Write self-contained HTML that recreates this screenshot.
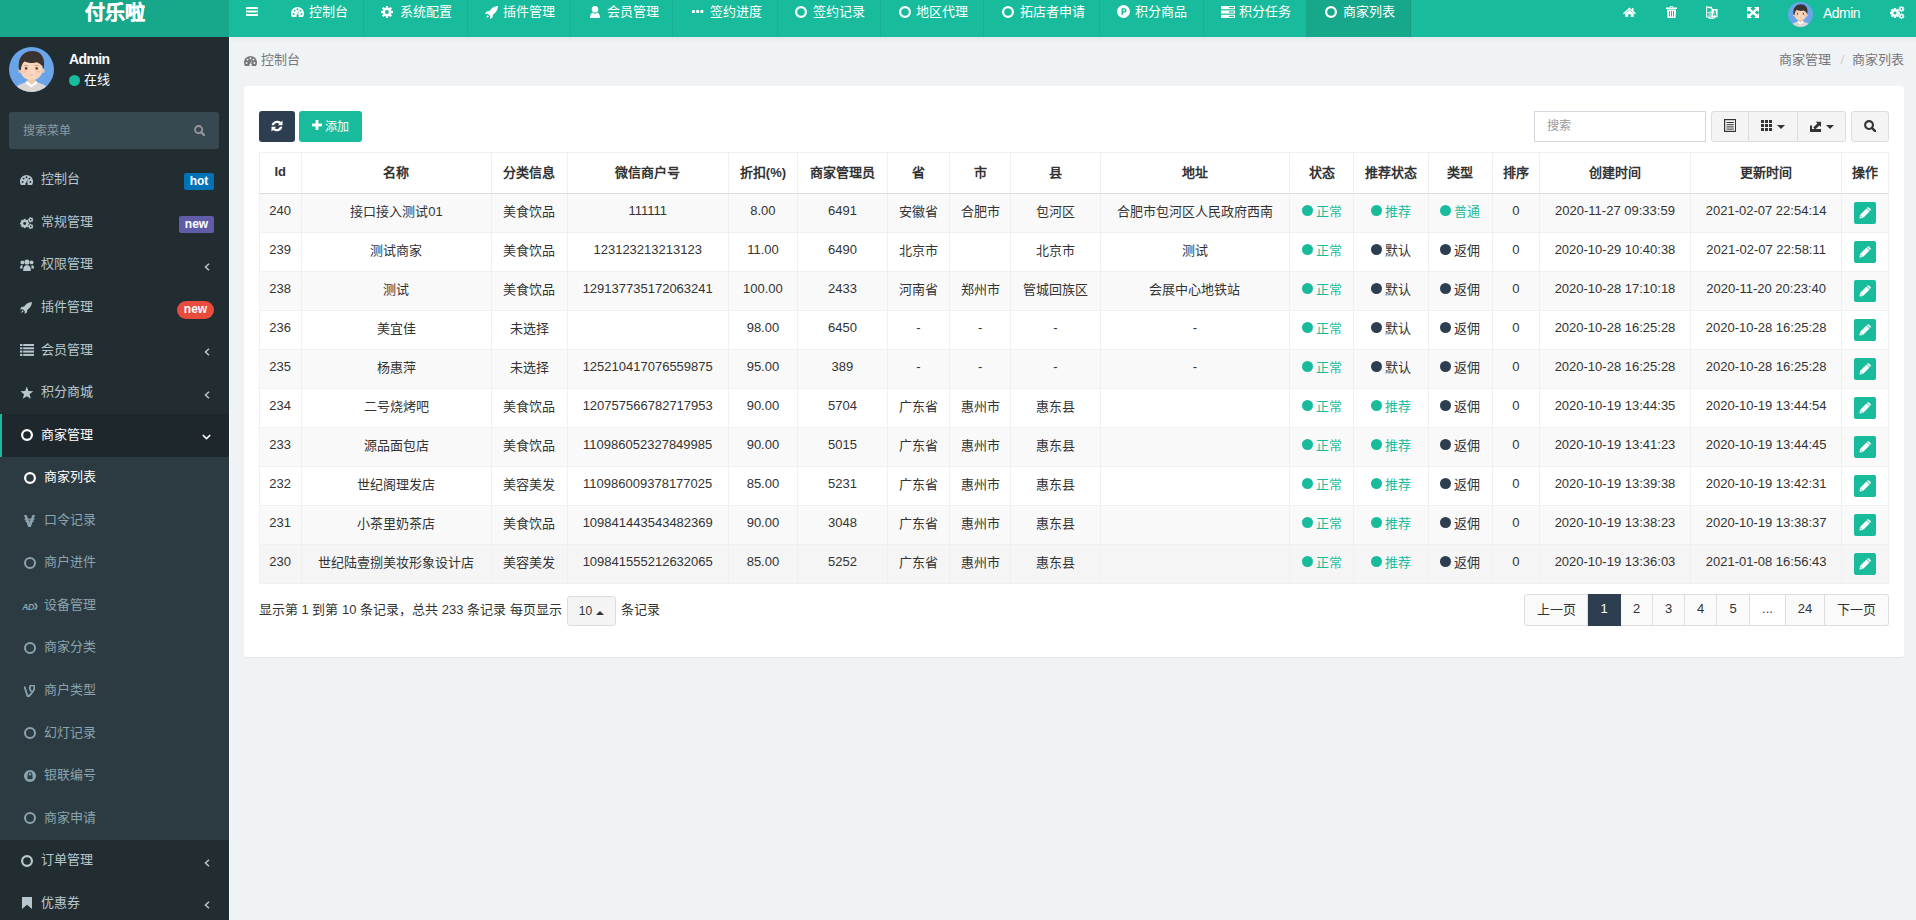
<!DOCTYPE html><html lang="zh-CN"><head><meta charset="utf-8"><title>商家列表</title><style>*{box-sizing:border-box;margin:0;padding:0}
html,body{width:1916px;height:920px;overflow:hidden}
body{font-family:"Liberation Sans",sans-serif;font-size:13px;color:#333;background:#f0f3f6;position:relative}
.abs{position:absolute}
svg{display:block}
span svg,i svg{display:inline-block}
#logo{left:0;top:0;width:229px;height:37px;background:#17a78a;color:#fff;font-size:20px;font-weight:bold;text-align:center;line-height:27px;-webkit-text-stroke:0.4px #fff}
#nav{left:229px;top:0;width:1687px;height:37px;background:#18bc9c}
.tab{position:absolute;top:0;height:37px;border-right:1px solid rgba(0,0,0,0.06)}
.tab.active{background:#17a78a}
.navtx{position:absolute;top:3.5px;line-height:16px;font-size:13px;color:#fff;white-space:nowrap}
#side{left:0;top:37px;width:229px;height:883px;background:#222d32}
#sideline{left:229px;top:37px;width:1px;height:883px;background:#fff}
.sidetx{line-height:16px;white-space:nowrap}
#sbox{left:9px;top:112px;width:210px;height:37px;background:#374850;border-radius:3px}
.mi,.si{position:absolute;left:0;width:229px;height:42.55px;color:#b8c7ce}
.mi.act{background:#1e282c;color:#fff;border-left:2px solid #18bc9c}
.mic{position:absolute;left:20px;top:50%;transform:translateY(-50%)}
.mi.act .mic{left:19px}
.mtx{position:absolute;left:40.7px;top:12.5px;line-height:16px;white-space:nowrap}
.mi.act .mtx{left:39px}
.si{color:#8aa4af}
.si.act{color:#fff}
.sic{position:absolute;left:24px;top:50%;transform:translateY(-50%)}
.stx{position:absolute;left:44px;top:12.5px;line-height:16px;white-space:nowrap}
.badge{position:absolute;color:#fff;font-weight:bold;font-size:12px;text-align:center;line-height:17px;height:17px}
#crumb-l{left:244px;top:52px;color:#777;line-height:16px;display:flex;align-items:center}
.cic{margin-right:4px;display:inline-block;position:relative;top:1.5px}
#crumb-r{right:12px;top:52px;color:#777;line-height:16px}
#crumb-r .sep{color:#ccc;margin:0 8px 0 9px}
#panel{left:244px;top:86px;width:1660px;height:571px;background:#fff;border-radius:3px;box-shadow:0 1px 1px rgba(0,0,0,0.05)}
.btn{padding-bottom:2px;top:111px;height:31px;border-radius:3px;display:flex;align-items:center;justify-content:center;color:#fff}
#sinput{left:1534px;top:111px;width:172px;height:31px;border:1px solid #d2d6de;color:#999;font-size:12px;padding-left:12px;line-height:29px}
.bgrp{padding-bottom:2px;top:111px;height:31px;border:1px solid #ddd;background:#f4f4f4;display:flex;align-items:center;justify-content:center}
.vl{width:1px;background:#f0f0f0}
.th{padding-bottom:4px;font-weight:bold;display:flex;align-items:center;justify-content:center;white-space:nowrap}
.td{padding-bottom:6px;display:flex;align-items:center;justify-content:center;white-space:nowrap;overflow:hidden}
.st{display:inline-flex;align-items:center}
.st.g{color:#18bc9c}
.dot{display:inline-block;width:11px;height:11px;border-radius:50%;margin-right:3px;background:#2c3e50}
.st.g .dot{background:#18bc9c}
.edit{display:flex;align-items:center;justify-content:center;width:22px;height:22px;background:#18bc9c;border-radius:2px}
#pinfo{left:259px;top:602px;line-height:16px;white-space:nowrap}
#psize{left:567px;top:596px;width:49px;height:30px;border:1px solid #ddd;background:#f4f4f4;border-radius:3px;font-size:12px;display:flex;align-items:center;justify-content:center}
#pinfo2{left:621px;top:602px;line-height:16px}
.pg{padding-bottom:4px;top:594px;height:32px;border:1px solid #ddd;border-left:none;background:#fafafa;color:#333;display:flex;align-items:center;justify-content:center}
.pg.pfirst{border-left:1px solid #ddd;border-radius:3px 0 0 3px}
.pg.plast{border-radius:0 3px 3px 0}
.pg.pact{background:#2c3e50;border-color:#2c3e50;color:#fff}
.pg.pell{background:#fff}
</style></head><body>
<div class="abs" id="logo"><span>付乐啦</span></div>
<div class="abs" id="nav"></div>
<div class="abs" style="left:246px;top:7px"><svg width="12" height="9" viewBox="0 0 12 9" style=""><rect x="0" y="0" width="12" height="2" fill="#fff"/><rect x="0" y="3.5" width="12" height="2" fill="#fff"/><rect x="0" y="7" width="12" height="2" fill="#fff"/></svg></div>
<div class="tab" style="left:273px;width:91px"></div>
<div class="abs" style="left:291px;top:7px"><svg width="13" height="10" viewBox="0 0 13 10" style=""><path d="M1.02 10 A6.5 6.5 0 1 1 11.98 10 Z" fill="#fff"/><circle cx="2.6" cy="7" r="0.95" fill="#18bc9c"/><circle cx="3.6" cy="3.6" r="0.95" fill="#18bc9c"/><circle cx="6.5" cy="2.3" r="0.95" fill="#18bc9c"/><circle cx="9.4" cy="3.6" r="0.95" fill="#18bc9c"/><circle cx="10.4" cy="7" r="0.95" fill="#18bc9c"/><path d="M6 8.6 L7.6 3.6 L7.2 8.8 Z" fill="#18bc9c"/><circle cx="6.6" cy="8.9" r="1.2" fill="#18bc9c"/></svg></div>
<div class="navtx" style="left:309px">控制台</div>
<div class="tab" style="left:363px;width:105px"></div>
<div class="abs" style="left:381px;top:6px"><svg width="12" height="12" viewBox="0 0 12 12" style=""><rect x="4.9" y="0" width="2.2" height="12" fill="#fff" transform="rotate(0 6 6)"/><rect x="4.9" y="0" width="2.2" height="12" fill="#fff" transform="rotate(45 6 6)"/><rect x="4.9" y="0" width="2.2" height="12" fill="#fff" transform="rotate(90 6 6)"/><rect x="4.9" y="0" width="2.2" height="12" fill="#fff" transform="rotate(135 6 6)"/><circle cx="6" cy="6" r="4.6" fill="#fff"/><circle cx="6" cy="6" r="1.9" fill="#18bc9c"/></svg></div>
<div class="navtx" style="left:400px">系统配置</div>
<div class="tab" style="left:467px;width:104px"></div>
<div class="abs" style="left:485px;top:6px"><svg width="13" height="13" viewBox="0 0 13 13" style=""><path d="M13 0 C9 0.2 6.5 2 4.5 5 L1.5 5.5 L0 8 L3 7.8 L5.2 10 L5 13 L7.5 11.5 L8 8.5 C11 6.5 12.8 4 13 0 Z" fill="#fff"/><path d="M2.6 9 L1 12 L4 10.4 Z" fill="#fff"/></svg></div>
<div class="navtx" style="left:503px">插件管理</div>
<div class="tab" style="left:570px;width:103px"></div>
<div class="abs" style="left:590px;top:6px"><svg width="10" height="12" viewBox="0 0 10 12" style=""><circle cx="5" cy="3.2" r="3.2" fill="#fff"/><path d="M0 12 C0 8.5 1.5 6.8 3 6.6 L5 8 L7 6.6 C8.5 6.8 10 8.5 10 12 Z" fill="#fff"/></svg></div>
<div class="navtx" style="left:607px">会员管理</div>
<div class="tab" style="left:672px;width:106px"></div>
<div class="abs" style="left:692px;top:10px"><svg width="12" height="3" viewBox="0 0 12 3" style=""><rect x="0" y="0" width="3" height="3" rx="0.8" fill="#fff"/><rect x="4.2" y="0" width="3" height="3" rx="0.8" fill="#fff"/><rect x="8.4" y="0" width="3" height="3" rx="0.8" fill="#fff"/></svg></div>
<div class="navtx" style="left:710px">签约进度</div>
<div class="tab" style="left:777px;width:104px"></div>
<div class="abs" style="left:795px;top:6px"><svg width="12" height="12" viewBox="0 0 12 12" style=""><circle cx="6.0" cy="6.0" r="4.90" fill="none" stroke="#fff" stroke-width="2.2"/></svg></div>
<div class="navtx" style="left:813px">签约记录</div>
<div class="tab" style="left:880px;width:104px"></div>
<div class="abs" style="left:899px;top:6px"><svg width="12" height="12" viewBox="0 0 12 12" style=""><circle cx="6.0" cy="6.0" r="4.90" fill="none" stroke="#fff" stroke-width="2.2"/></svg></div>
<div class="navtx" style="left:916px">地区代理</div>
<div class="tab" style="left:983px;width:117px"></div>
<div class="abs" style="left:1002px;top:6px"><svg width="12" height="12" viewBox="0 0 12 12" style=""><circle cx="6.0" cy="6.0" r="4.90" fill="none" stroke="#fff" stroke-width="2.2"/></svg></div>
<div class="navtx" style="left:1020px">拓店者申请</div>
<div class="tab" style="left:1099px;width:105px"></div>
<div class="abs" style="left:1117px;top:5px"><svg width="13" height="13" viewBox="0 0 13 13" style=""><circle cx="6.5" cy="6.5" r="6.5" fill="#fff"/><path d="M4.5 3.2 H7.3 A2.2 2.2 0 0 1 7.3 7.6 H6.2 V9.8 H4.5 Z M6.2 4.6 V6.2 H7.1 A0.8 0.8 0 0 0 7.1 4.6 Z" fill="#18bc9c"/></svg></div>
<div class="navtx" style="left:1135px">积分商品</div>
<div class="tab" style="left:1203px;width:104px"></div>
<div class="abs" style="left:1221px;top:6px"><svg width="14" height="12" viewBox="0 0 14 12" style=""><rect x="0" y="0" width="14" height="3.2" fill="#fff"/><rect x="0" y="4.4" width="14" height="3.2" fill="#fff"/><rect x="0" y="8.8" width="14" height="3.2" fill="#fff"/><rect x="8" y="1" width="5" height="1.2" fill="#18bc9c"/><rect x="8" y="5.4" width="5" height="1.2" fill="#18bc9c"/><rect x="8" y="9.8" width="5" height="1.2" fill="#18bc9c"/></svg></div>
<div class="navtx" style="left:1239px">积分任务</div>
<div class="tab active" style="left:1306px;width:105px"></div>
<div class="abs" style="left:1325px;top:6px"><svg width="12" height="12" viewBox="0 0 12 12" style=""><circle cx="6.0" cy="6.0" r="4.90" fill="none" stroke="#fff" stroke-width="2.2"/></svg></div>
<div class="navtx" style="left:1343px">商家列表</div>
<div class="abs" style="left:1623px;top:7px"><svg width="13" height="10" viewBox="0 0 13 10" style=""><path d="M6.5 0.5 L0 6.3 L1 7.3 L6.5 2.5 L12 7.3 L13 6.3 L10.5 4 V1 H9 V2.7 Z" fill="#fff"/><path d="M2.3 6.5 L6.5 2.9 L10.7 6.5 V10 H7.8 V7.2 H5.2 V10 H2.3 Z" fill="#fff"/></svg></div>
<div class="abs" style="left:1666px;top:6px"><svg width="11" height="12" viewBox="0 0 11 12" style=""><path d="M3.5 1.5 Q3.5 0 5 0 H6 Q7.5 0 7.5 1.5 H11 V3 H0 V1.5 Z" fill="#fff"/><rect x="4.6" y="0.8" width="1.8" height="0.9" fill="#18bc9c"/><path d="M1 3.5 H10 L9.5 11.5 Q9.4 12 9 12 H2 Q1.6 12 1.5 11.5 Z" fill="#fff"/><rect x="3" y="5" width="1" height="5.5" fill="#18bc9c"/><rect x="5" y="5" width="1" height="5.5" fill="#18bc9c"/><rect x="7" y="5" width="1" height="5.5" fill="#18bc9c"/></svg></div>
<div class="abs" style="left:1706px;top:6px"><svg width="12" height="13" viewBox="0 0 12 13" style=""><path d="M0.6 0.8 L6 2.6 V11 H0.6 Z" fill="none" stroke="#fff" stroke-width="1.1"/><path d="M0.6 0.8 L6 2.6 L6 0.8 Z" fill="#fff"/><rect x="6" y="3" width="5.6" height="8.3" fill="#fff"/><path d="M7.5 10.2 L8.8 4.4 L10.1 10.2 M8 8.5 H9.6" stroke="#18bc9c" stroke-width="1" fill="none"/><text x="1.1" y="9" font-size="5" fill="#fff" font-family="Liberation Sans">文</text><path d="M2.2 11.3 Q5.5 13.8 9 11.3" stroke="#fff" stroke-width="1.2" fill="none"/></svg></div>
<div class="abs" style="left:1747px;top:7px"><svg width="12" height="11" viewBox="0 0 12 11" style=""><path d="M1.6 1.6 L10.4 9.4 M10.4 1.6 L1.6 9.4" stroke="#fff" stroke-width="2.4"/><path d="M0 0 H5 L0 5 Z M12 0 H7 L12 5 Z M0 11 H5 L0 6 Z M12 11 H7 L12 6 Z" fill="#fff"/></svg></div>
<div class="abs" style="left:1788px;top:2px"><svg width="25" height="25" viewBox="0 0 100 100"><defs><clipPath id="cp25"><circle cx="50" cy="50" r="50"/></clipPath></defs><g clip-path="url(#cp25)"><rect width="100" height="100" fill="#6aa5ea"/><path d="M12 100 C14 86 26 79 50 78 C74 79 86 86 88 100 Z" fill="#d9d6d3"/><rect x="41" y="66" width="18" height="16" fill="#f2c7a5"/><path d="M36 80 L50 90 L64 80 L60 75 L50 84 L40 75 Z" fill="#fff"/><path d="M26 42 C26 24 36 30 50 30 C64 30 74 24 74 42 L74 52 C74 64 64 73 50 73 C36 73 26 64 26 52 Z" fill="#f8d5bb"/><ellipse cx="24.5" cy="53" rx="3.6" ry="5" fill="#f3c8a8"/><ellipse cx="75.5" cy="53" rx="3.6" ry="5" fill="#f3c8a8"/><path d="M22 50 C18 22 34 9 52 9 C70 9 82 22 77 49 C75 42 70 37 62 34 C50 38 40 33 34 32 C30 36 27 42 26 52 Z" fill="#3a3331"/><ellipse cx="38" cy="47.5" rx="2.8" ry="3.2" fill="#5b4434"/><ellipse cx="61.5" cy="47.5" rx="2.8" ry="3.2" fill="#5b4434"/><path d="M33 41.5 Q38 40 42 42" stroke="#7c6a5e" stroke-width="1.2" fill="none"/><path d="M57 42 Q62 40 66 41.5" stroke="#7c6a5e" stroke-width="1.2" fill="none"/><ellipse cx="35" cy="55" rx="4.5" ry="2.6" fill="#f5bcae"/><ellipse cx="65" cy="55" rx="4.5" ry="2.6" fill="#f5bcae"/><path d="M47 61.5 Q50 63.5 53 61.5" stroke="#ee9c96" stroke-width="1.8" fill="none"/></g></svg></div>
<div class="abs" style="left:1823px;top:4.5px;color:#fff;font-size:14px;letter-spacing:-0.55px;line-height:17px">Admin</div>
<div class="abs" style="left:1890px;top:6px"><svg width="15" height="13" viewBox="0 0 15 13" style=""><rect x="3.90" y="2.00" width="2.20" height="10.00" fill="#fff" transform="rotate(0 5 7)"/><rect x="3.90" y="2.00" width="2.20" height="10.00" fill="#fff" transform="rotate(45 5 7)"/><rect x="3.90" y="2.00" width="2.20" height="10.00" fill="#fff" transform="rotate(90 5 7)"/><rect x="3.90" y="2.00" width="2.20" height="10.00" fill="#fff" transform="rotate(135 5 7)"/><circle cx="5" cy="7" r="3.8" fill="#fff"/><circle cx="5" cy="7" r="1.6" fill="#18bc9c"/><rect x="10.88" y="0.20" width="1.23" height="5.60" fill="#fff" transform="rotate(0 11.5 3)"/><rect x="10.88" y="0.20" width="1.23" height="5.60" fill="#fff" transform="rotate(45 11.5 3)"/><rect x="10.88" y="0.20" width="1.23" height="5.60" fill="#fff" transform="rotate(90 11.5 3)"/><rect x="10.88" y="0.20" width="1.23" height="5.60" fill="#fff" transform="rotate(135 11.5 3)"/><circle cx="11.5" cy="3" r="2.1" fill="#fff"/><circle cx="11.5" cy="3" r="0.9" fill="#18bc9c"/><rect x="10.88" y="7.40" width="1.23" height="5.60" fill="#fff" transform="rotate(0 11.5 10.2)"/><rect x="10.88" y="7.40" width="1.23" height="5.60" fill="#fff" transform="rotate(45 11.5 10.2)"/><rect x="10.88" y="7.40" width="1.23" height="5.60" fill="#fff" transform="rotate(90 11.5 10.2)"/><rect x="10.88" y="7.40" width="1.23" height="5.60" fill="#fff" transform="rotate(135 11.5 10.2)"/><circle cx="11.5" cy="10.2" r="2.1" fill="#fff"/><circle cx="11.5" cy="10.2" r="0.9" fill="#18bc9c"/></svg></div>
<div class="abs" id="side"></div>
<div class="abs" id="sideline"></div>
<div class="abs" style="left:9px;top:47px"><svg width="45" height="45" viewBox="0 0 100 100"><defs><clipPath id="cp45"><circle cx="50" cy="50" r="50"/></clipPath></defs><g clip-path="url(#cp45)"><rect width="100" height="100" fill="#6aa5ea"/><path d="M12 100 C14 86 26 79 50 78 C74 79 86 86 88 100 Z" fill="#d9d6d3"/><rect x="41" y="66" width="18" height="16" fill="#f2c7a5"/><path d="M36 80 L50 90 L64 80 L60 75 L50 84 L40 75 Z" fill="#fff"/><path d="M26 42 C26 24 36 30 50 30 C64 30 74 24 74 42 L74 52 C74 64 64 73 50 73 C36 73 26 64 26 52 Z" fill="#f8d5bb"/><ellipse cx="24.5" cy="53" rx="3.6" ry="5" fill="#f3c8a8"/><ellipse cx="75.5" cy="53" rx="3.6" ry="5" fill="#f3c8a8"/><path d="M22 50 C18 22 34 9 52 9 C70 9 82 22 77 49 C75 42 70 37 62 34 C50 38 40 33 34 32 C30 36 27 42 26 52 Z" fill="#3a3331"/><ellipse cx="38" cy="47.5" rx="2.8" ry="3.2" fill="#5b4434"/><ellipse cx="61.5" cy="47.5" rx="2.8" ry="3.2" fill="#5b4434"/><path d="M33 41.5 Q38 40 42 42" stroke="#7c6a5e" stroke-width="1.2" fill="none"/><path d="M57 42 Q62 40 66 41.5" stroke="#7c6a5e" stroke-width="1.2" fill="none"/><ellipse cx="35" cy="55" rx="4.5" ry="2.6" fill="#f5bcae"/><ellipse cx="65" cy="55" rx="4.5" ry="2.6" fill="#f5bcae"/><path d="M47 61.5 Q50 63.5 53 61.5" stroke="#ee9c96" stroke-width="1.8" fill="none"/></g></svg></div>
<div class="abs" style="left:69px;top:50.5px;color:#fff;font-weight:bold;font-size:14px;letter-spacing:-0.6px;line-height:17px">Admin</div>
<div class="abs" style="left:69px;top:75px;width:11px;height:11px;border-radius:50%;background:#18bc9c"></div>
<div class="abs sidetx" style="left:84px;top:72px;color:#fff">在线</div>
<div class="abs" id="sbox"></div>
<div class="abs sidetx" style="left:23px;top:123px;color:#8b9aa1;font-size:12px">搜索菜单</div>
<div class="abs" style="left:194px;top:125px"><svg width="11" height="11" viewBox="0 0 11 11" style=""><circle cx="4.6" cy="4.6" r="3.6" fill="none" stroke="#999" stroke-width="1.8"/><path d="M7.2 7.2 L10.3 10.3" stroke="#999" stroke-width="2.2" stroke-linecap="round"/></svg></div>
<div class="mi" style="top:158.85px"><div class="mic"><svg width="13" height="10" viewBox="0 0 13 10" style=""><path d="M1.02 10 A6.5 6.5 0 1 1 11.98 10 Z" fill="#b8c7ce"/><circle cx="2.6" cy="7" r="0.95" fill="#222d32"/><circle cx="3.6" cy="3.6" r="0.95" fill="#222d32"/><circle cx="6.5" cy="2.3" r="0.95" fill="#222d32"/><circle cx="9.4" cy="3.6" r="0.95" fill="#222d32"/><circle cx="10.4" cy="7" r="0.95" fill="#222d32"/><path d="M6 8.6 L7.6 3.6 L7.2 8.8 Z" fill="#222d32"/><circle cx="6.6" cy="8.9" r="1.2" fill="#222d32"/></svg></div><div class="mtx">控制台</div></div>
<div class="badge" style="left:184px;top:173.00px;width:30px;background:#0073b7;border-radius:2px">hot</div>
<div class="mi" style="top:201.40px"><div class="mic"><svg width="14" height="12" viewBox="0 0 15 13" style=""><rect x="3.90" y="2.00" width="2.20" height="10.00" fill="#b8c7ce" transform="rotate(0 5 7)"/><rect x="3.90" y="2.00" width="2.20" height="10.00" fill="#b8c7ce" transform="rotate(45 5 7)"/><rect x="3.90" y="2.00" width="2.20" height="10.00" fill="#b8c7ce" transform="rotate(90 5 7)"/><rect x="3.90" y="2.00" width="2.20" height="10.00" fill="#b8c7ce" transform="rotate(135 5 7)"/><circle cx="5" cy="7" r="3.8" fill="#b8c7ce"/><circle cx="5" cy="7" r="1.6" fill="#222d32"/><rect x="10.88" y="0.20" width="1.23" height="5.60" fill="#b8c7ce" transform="rotate(0 11.5 3)"/><rect x="10.88" y="0.20" width="1.23" height="5.60" fill="#b8c7ce" transform="rotate(45 11.5 3)"/><rect x="10.88" y="0.20" width="1.23" height="5.60" fill="#b8c7ce" transform="rotate(90 11.5 3)"/><rect x="10.88" y="0.20" width="1.23" height="5.60" fill="#b8c7ce" transform="rotate(135 11.5 3)"/><circle cx="11.5" cy="3" r="2.1" fill="#b8c7ce"/><circle cx="11.5" cy="3" r="0.9" fill="#222d32"/><rect x="10.88" y="7.40" width="1.23" height="5.60" fill="#b8c7ce" transform="rotate(0 11.5 10.2)"/><rect x="10.88" y="7.40" width="1.23" height="5.60" fill="#b8c7ce" transform="rotate(45 11.5 10.2)"/><rect x="10.88" y="7.40" width="1.23" height="5.60" fill="#b8c7ce" transform="rotate(90 11.5 10.2)"/><rect x="10.88" y="7.40" width="1.23" height="5.60" fill="#b8c7ce" transform="rotate(135 11.5 10.2)"/><circle cx="11.5" cy="10.2" r="2.1" fill="#b8c7ce"/><circle cx="11.5" cy="10.2" r="0.9" fill="#222d32"/></svg></div><div class="mtx">常规管理</div></div>
<div class="badge" style="left:179px;top:216.00px;width:35px;background:#605ca8;border-radius:2px">new</div>
<div class="mi" style="top:243.95px"><div class="mic"><svg width="14" height="12" viewBox="0 0 14 12" style=""><circle cx="7" cy="3" r="2.6" fill="#b8c7ce"/><path d="M3.2 12 C3.2 7.6 4.5 6.3 7 6.3 C9.5 6.3 10.8 7.6 10.8 12 Z" fill="#b8c7ce"/><circle cx="2.4" cy="3.4" r="1.9" fill="#b8c7ce"/><path d="M0 9.5 C0 6.8 0.8 6 2.5 6 C2.6 7 2.4 8 2.6 9.5 Z" fill="#b8c7ce"/><circle cx="11.6" cy="3.4" r="1.9" fill="#b8c7ce"/><path d="M14 9.5 C14 6.8 13.2 6 11.5 6 C11.4 7 11.6 8 11.4 9.5 Z" fill="#b8c7ce"/></svg></div><div class="mtx">权限管理</div></div>
<div class="abs" style="left:204px;top:263px"><svg width="6" height="8" viewBox="0 0 6 8" style=""><path d="M5 0.8 L1.5 4 L5 7.2" fill="none" stroke="#b8c7ce" stroke-width="1.5"/></svg></div>
<div class="mi" style="top:286.50px"><div class="mic"><svg width="12" height="12" viewBox="0 0 13 13" style=""><path d="M13 0 C9 0.2 6.5 2 4.5 5 L1.5 5.5 L0 8 L3 7.8 L5.2 10 L5 13 L7.5 11.5 L8 8.5 C11 6.5 12.8 4 13 0 Z" fill="#b8c7ce"/><path d="M2.6 9 L1 12 L4 10.4 Z" fill="#b8c7ce"/></svg></div><div class="mtx">插件管理</div></div>
<div class="badge" style="left:177px;top:301.00px;width:37px;height:18px;background:#e74c3c;border-radius:9px">new</div>
<div class="mi" style="top:329.05px"><div class="mic"><svg width="14" height="12" viewBox="0 0 14 12" style=""><rect x="0" y="0" width="2.4" height="2" fill="#b8c7ce"/><rect x="3.2" y="0" width="10.8" height="2" fill="#b8c7ce"/><rect x="0" y="3.3" width="2.4" height="2" fill="#b8c7ce"/><rect x="3.2" y="3.3" width="10.8" height="2" fill="#b8c7ce"/><rect x="0" y="6.6" width="2.4" height="2" fill="#b8c7ce"/><rect x="3.2" y="6.6" width="10.8" height="2" fill="#b8c7ce"/><rect x="0" y="9.9" width="2.4" height="2" fill="#b8c7ce"/><rect x="3.2" y="9.9" width="10.8" height="2" fill="#b8c7ce"/></svg></div><div class="mtx">会员管理</div></div>
<div class="abs" style="left:204px;top:348px"><svg width="6" height="8" viewBox="0 0 6 8" style=""><path d="M5 0.8 L1.5 4 L5 7.2" fill="none" stroke="#b8c7ce" stroke-width="1.5"/></svg></div>
<div class="mi" style="top:371.60px"><div class="mic"><svg width="14" height="13" viewBox="0 0 14 13" style=""><polygon points="6.80,0.00 8.50,4.45 13.27,4.70 9.56,7.70 10.80,12.30 6.80,9.70 2.80,12.30 4.04,7.70 0.33,4.70 5.10,4.45" fill="#b8c7ce"/></svg></div><div class="mtx">积分商城</div></div>
<div class="abs" style="left:204px;top:391px"><svg width="6" height="8" viewBox="0 0 6 8" style=""><path d="M5 0.8 L1.5 4 L5 7.2" fill="none" stroke="#b8c7ce" stroke-width="1.5"/></svg></div>
<div class="mi act" style="top:414.15px"><div class="mic"><svg width="12" height="12" viewBox="0 0 12 12" style=""><circle cx="6.0" cy="6.0" r="4.90" fill="none" stroke="#fff" stroke-width="2.2"/></svg></div><div class="mtx">商家管理</div></div>
<div class="abs" style="left:202px;top:434px"><svg width="9" height="6" viewBox="0 0 9 6" style=""><path d="M0.8 1 L4.5 4.6 L8.2 1" fill="none" stroke="#fff" stroke-width="1.6"/></svg></div>
<div class="abs" style="left:0;top:456.70px;width:229px;height:382.95px;background:#2c3b41"></div>
<div class="si act" style="top:456.70px"><div class="sic"><svg width="12" height="12" viewBox="0 0 12 12" style=""><circle cx="6.0" cy="6.0" r="4.90" fill="none" stroke="#fff" stroke-width="2.2"/></svg></div><div class="stx">商家列表</div></div>
<div class="si" style="top:499.25px"><div class="sic"><svg width="11" height="12" viewBox="0 0 11 12" style=""><path d="M0 0 H2.6 L5.5 8 L8.4 0 H11 L6.8 12 H4.2 Z" fill="#8aa4af"/><rect x="0.5" y="3.6" width="10" height="1.2" fill="#8aa4af"/><rect x="1.2" y="5.6" width="8.6" height="1.2" fill="#8aa4af"/></svg></div><div class="stx">口令记录</div></div>
<div class="si" style="top:541.80px"><div class="sic"><svg width="12" height="12" viewBox="0 0 12 12" style=""><circle cx="6.0" cy="6.0" r="5.00" fill="none" stroke="#8aa4af" stroke-width="2.0"/></svg></div><div class="stx">商户进件</div></div>
<div class="si" style="top:584.35px"><div class="sic" style="left:22px"><svg width="16" height="10" viewBox="0 0 16 10" style=""><text x="0" y="8.5" font-size="9" font-weight="bold" font-style="italic" fill="#8aa4af" font-family="Liberation Sans" letter-spacing="-0.6">AD</text><path d="M12.6 2.2 A3.2 3.2 0 0 1 12.6 8.2" fill="none" stroke="#8aa4af" stroke-width="1.6"/></svg></div><div class="stx">设备管理</div></div>
<div class="si" style="top:626.90px"><div class="sic"><svg width="12" height="12" viewBox="0 0 12 12" style=""><circle cx="6.0" cy="6.0" r="5.00" fill="none" stroke="#8aa4af" stroke-width="2.0"/></svg></div><div class="stx">商家分类</div></div>
<div class="si" style="top:669.45px"><div class="sic"><svg width="11" height="12" viewBox="0 0 11 12" style=""><path d="M0.5 1.5 L3.5 11 L5 11 C8 8 10.5 5 10.5 2.5 C10.5 0.5 9 0 8 0 C6.5 0 5.8 1.5 5.8 3 C5.8 5 7 6 7.5 6.5" fill="none" stroke="#8aa4af" stroke-width="1.8"/></svg></div><div class="stx">商户类型</div></div>
<div class="si" style="top:712.00px"><div class="sic"><svg width="12" height="12" viewBox="0 0 12 12" style=""><circle cx="6.0" cy="6.0" r="5.00" fill="none" stroke="#8aa4af" stroke-width="2.0"/></svg></div><div class="stx">幻灯记录</div></div>
<div class="si" style="top:754.55px"><div class="sic"><svg width="12" height="12" viewBox="0 0 12 12" style=""><circle cx="6" cy="6" r="6" fill="#8aa4af"/><rect x="3.5" y="5.3" width="5" height="3.8" fill="#2c3b41"/><path d="M4.3 5.5 V4.2 A1.7 1.7 0 0 1 7.7 4.2 V5.5" fill="none" stroke="#2c3b41" stroke-width="1.1"/></svg></div><div class="stx">银联编号</div></div>
<div class="si" style="top:797.10px"><div class="sic"><svg width="12" height="12" viewBox="0 0 12 12" style=""><circle cx="6.0" cy="6.0" r="5.00" fill="none" stroke="#8aa4af" stroke-width="2.0"/></svg></div><div class="stx">商家申请</div></div>
<div class="mi" style="top:839.65px"><div class="mic" style="left:21px"><svg width="12" height="12" viewBox="0 0 12 12" style=""><circle cx="6.0" cy="6.0" r="4.90" fill="none" stroke="#b8c7ce" stroke-width="2.2"/></svg></div><div class="mtx">订单管理</div></div>
<div class="abs" style="left:204px;top:859px"><svg width="6" height="8" viewBox="0 0 6 8" style=""><path d="M5 0.8 L1.5 4 L5 7.2" fill="none" stroke="#b8c7ce" stroke-width="1.5"/></svg></div>
<div class="mi" style="top:882.20px"><div class="mic" style="left:22px"><svg width="10" height="12" viewBox="0 0 10 12" style=""><path d="M0 0 H10 V12 L5 7.8 L0 12 Z" fill="#b8c7ce"/></svg></div><div class="mtx">优惠券</div></div>
<div class="abs" style="left:204px;top:901px"><svg width="6" height="8" viewBox="0 0 6 8" style=""><path d="M5 0.8 L1.5 4 L5 7.2" fill="none" stroke="#b8c7ce" stroke-width="1.5"/></svg></div>
<div class="abs" id="crumb-l"><span class="cic"><svg width="13" height="10" viewBox="0 0 13 10" style=""><path d="M1.02 10 A6.5 6.5 0 1 1 11.98 10 Z" fill="#777"/><circle cx="2.6" cy="7" r="0.95" fill="#f0f3f6"/><circle cx="3.6" cy="3.6" r="0.95" fill="#f0f3f6"/><circle cx="6.5" cy="2.3" r="0.95" fill="#f0f3f6"/><circle cx="9.4" cy="3.6" r="0.95" fill="#f0f3f6"/><circle cx="10.4" cy="7" r="0.95" fill="#f0f3f6"/><path d="M6 8.6 L7.6 3.6 L7.2 8.8 Z" fill="#f0f3f6"/><circle cx="6.6" cy="8.9" r="1.2" fill="#f0f3f6"/></svg></span>控制台</div>
<div class="abs" id="crumb-r">商家管理<span class="sep">/</span>商家列表</div>
<div class="abs" id="panel"></div>
<div class="abs" style="left:230px;top:37px;width:1686px;height:5px;background:linear-gradient(rgba(0,0,0,0.045),rgba(0,0,0,0))"></div>
<div class="abs btn" style="left:259px;top:111px;width:36px;background:#2c3e50"><svg width="12" height="12" viewBox="0 0 12 12" style=""><path d="M11.5 0.5 V5.2 H6.8 L8.3 3.7 A3.4 3.4 0 0 0 3 5.2 H0.6 A5.7 5.7 0 0 1 9.9 2.1 Z" fill="#fff"/><path d="M0.5 11.5 V6.8 H5.2 L3.7 8.3 A3.4 3.4 0 0 0 9 6.8 H11.4 A5.7 5.7 0 0 1 2.1 9.9 Z" fill="#fff"/></svg></div>
<div class="abs btn" style="left:299px;top:111px;width:63px;background:#18bc9c;color:#fff;font-size:12px"><span style="margin-right:3px"><svg width="10" height="10" viewBox="0 0 10 10" style=""><rect x="3.6" y="0" width="2.8" height="10" fill="#fff"/><rect x="0" y="3.6" width="10" height="2.8" fill="#fff"/></svg></span>添加</div>
<div class="abs" id="sinput">搜索</div>
<div class="abs bgrp" style="left:1711px;width:38px;border-radius:3px 0 0 3px"><svg width="12" height="13" viewBox="0 0 12 13" style=""><rect x="0.6" y="0.6" width="11" height="11.8" fill="none" stroke="#333" stroke-width="1.2"/><rect x="2.5" y="3" width="7.3" height="1" fill="#333"/><rect x="2.5" y="5.2" width="7.3" height="1" fill="#333"/><rect x="2.5" y="7.4" width="7.3" height="1" fill="#333"/><rect x="2.5" y="9.6" width="7.3" height="1" fill="#333"/></svg></div>
<div class="abs bgrp" style="left:1749px;width:49px;border-left:none"><svg width="11" height="11" viewBox="0 0 11 11" style=""><rect x="0" y="0" width="3" height="3" fill="#333"/><rect x="0" y="4" width="3" height="3" fill="#333"/><rect x="0" y="8" width="3" height="3" fill="#333"/><rect x="4" y="0" width="3" height="3" fill="#333"/><rect x="4" y="4" width="3" height="3" fill="#333"/><rect x="4" y="8" width="3" height="3" fill="#333"/><rect x="8" y="0" width="3" height="3" fill="#333"/><rect x="8" y="4" width="3" height="3" fill="#333"/><rect x="8" y="8" width="3" height="3" fill="#333"/></svg><span style="margin-left:5px;position:relative;top:-1px"><svg width="8" height="4" viewBox="0 0 8 4" style=""><path d="M0 0 H8 L4 4 Z" fill="#333"/></svg></span></div>
<div class="abs bgrp" style="left:1798px;width:48px;border-left:none;border-radius:0 3px 3px 0"><svg width="11" height="12" viewBox="0 0 11 12" style=""><rect x="0" y="9" width="11" height="3" fill="#333"/><rect x="0" y="5.5" width="2" height="3.5" fill="#333"/><path d="M3.2 7.6 L7.4 3.4 L5.8 1.8 H11 V7 L9.4 5.4 L5.2 9.6 Z" fill="#333"/></svg><span style="margin-left:5px;position:relative;top:-1px"><svg width="8" height="4" viewBox="0 0 8 4" style=""><path d="M0 0 H8 L4 4 Z" fill="#333"/></svg></span></div>
<div class="abs bgrp" style="left:1851px;width:38px;border-radius:3px"><svg width="12" height="12" viewBox="0 0 11 11" style=""><circle cx="4.6" cy="4.6" r="3.6" fill="none" stroke="#333" stroke-width="1.9"/><path d="M7.2 7.2 L10.3 10.3" stroke="#333" stroke-width="2.2" stroke-linecap="round"/></svg></div>
<div class="abs" style="left:259px;top:152px;width:1629.8px;height:1px;background:#f0f0f0"></div>
<div class="abs" style="left:259px;top:193px;width:1629.8px;height:1px;background:#ddd"></div>
<div class="abs" style="left:259px;top:194px;width:1629.8px;height:39px;background:#f9f9f9;border-bottom:1px solid #f0f0f0"></div>
<div class="abs" style="left:259px;top:233px;width:1629.8px;height:39px;background:#fff;border-bottom:1px solid #f0f0f0"></div>
<div class="abs" style="left:259px;top:272px;width:1629.8px;height:39px;background:#f9f9f9;border-bottom:1px solid #f0f0f0"></div>
<div class="abs" style="left:259px;top:311px;width:1629.8px;height:39px;background:#fff;border-bottom:1px solid #f0f0f0"></div>
<div class="abs" style="left:259px;top:350px;width:1629.8px;height:39px;background:#f9f9f9;border-bottom:1px solid #f0f0f0"></div>
<div class="abs" style="left:259px;top:389px;width:1629.8px;height:39px;background:#fff;border-bottom:1px solid #f0f0f0"></div>
<div class="abs" style="left:259px;top:428px;width:1629.8px;height:39px;background:#f9f9f9;border-bottom:1px solid #f0f0f0"></div>
<div class="abs" style="left:259px;top:467px;width:1629.8px;height:39px;background:#fff;border-bottom:1px solid #f0f0f0"></div>
<div class="abs" style="left:259px;top:506px;width:1629.8px;height:39px;background:#f9f9f9;border-bottom:1px solid #f0f0f0"></div>
<div class="abs" style="left:259px;top:545px;width:1629.8px;height:39px;background:#f5f5f5;border-bottom:1px solid #f0f0f0"></div>
<div class="abs vl" style="left:259px;top:152px;height:41px"></div>
<div class="abs vl" style="left:259px;top:194px;height:390px"></div>
<div class="abs vl" style="left:301px;top:152px;height:41px"></div>
<div class="abs vl" style="left:301px;top:194px;height:390px"></div>
<div class="abs vl" style="left:491px;top:152px;height:41px"></div>
<div class="abs vl" style="left:491px;top:194px;height:390px"></div>
<div class="abs vl" style="left:567px;top:152px;height:41px"></div>
<div class="abs vl" style="left:567px;top:194px;height:390px"></div>
<div class="abs vl" style="left:728px;top:152px;height:41px"></div>
<div class="abs vl" style="left:728px;top:194px;height:390px"></div>
<div class="abs vl" style="left:797px;top:152px;height:41px"></div>
<div class="abs vl" style="left:797px;top:194px;height:390px"></div>
<div class="abs vl" style="left:887px;top:152px;height:41px"></div>
<div class="abs vl" style="left:887px;top:194px;height:390px"></div>
<div class="abs vl" style="left:949px;top:152px;height:41px"></div>
<div class="abs vl" style="left:949px;top:194px;height:390px"></div>
<div class="abs vl" style="left:1010px;top:152px;height:41px"></div>
<div class="abs vl" style="left:1010px;top:194px;height:390px"></div>
<div class="abs vl" style="left:1100px;top:152px;height:41px"></div>
<div class="abs vl" style="left:1100px;top:194px;height:390px"></div>
<div class="abs vl" style="left:1289px;top:152px;height:41px"></div>
<div class="abs vl" style="left:1289px;top:194px;height:390px"></div>
<div class="abs vl" style="left:1353px;top:152px;height:41px"></div>
<div class="abs vl" style="left:1353px;top:194px;height:390px"></div>
<div class="abs vl" style="left:1428px;top:152px;height:41px"></div>
<div class="abs vl" style="left:1428px;top:194px;height:390px"></div>
<div class="abs vl" style="left:1492px;top:152px;height:41px"></div>
<div class="abs vl" style="left:1492px;top:194px;height:390px"></div>
<div class="abs vl" style="left:1539px;top:152px;height:41px"></div>
<div class="abs vl" style="left:1539px;top:194px;height:390px"></div>
<div class="abs vl" style="left:1690px;top:152px;height:41px"></div>
<div class="abs vl" style="left:1690px;top:194px;height:390px"></div>
<div class="abs vl" style="left:1841px;top:152px;height:41px"></div>
<div class="abs vl" style="left:1841px;top:194px;height:390px"></div>
<div class="abs vl" style="left:1888px;top:152px;height:41px"></div>
<div class="abs vl" style="left:1888px;top:194px;height:390px"></div>
<div class="abs th" style="left:259px;width:42.4px;top:153px;height:40px">Id</div>
<div class="abs th" style="left:301.4px;width:190.0px;top:153px;height:40px">名称</div>
<div class="abs th" style="left:491.4px;width:75.6px;top:153px;height:40px">分类信息</div>
<div class="abs th" style="left:567px;width:161.4px;top:153px;height:40px">微信商户号</div>
<div class="abs th" style="left:728.4px;width:69.1px;top:153px;height:40px">折扣(%)</div>
<div class="abs th" style="left:797.5px;width:89.9px;top:153px;height:40px">商家管理员</div>
<div class="abs th" style="left:887.4px;width:62.2px;top:153px;height:40px">省</div>
<div class="abs th" style="left:949.6px;width:61.0px;top:153px;height:40px">市</div>
<div class="abs th" style="left:1010.6px;width:89.8px;top:153px;height:40px">县</div>
<div class="abs th" style="left:1100.4px;width:189.0px;top:153px;height:40px">地址</div>
<div class="abs th" style="left:1289.4px;width:64.3px;top:153px;height:40px">状态</div>
<div class="abs th" style="left:1353.7px;width:74.8px;top:153px;height:40px">推荐状态</div>
<div class="abs th" style="left:1428.5px;width:63.8px;top:153px;height:40px">类型</div>
<div class="abs th" style="left:1492.3px;width:47.1px;top:153px;height:40px">排序</div>
<div class="abs th" style="left:1539.4px;width:151.2px;top:153px;height:40px">创建时间</div>
<div class="abs th" style="left:1690.6px;width:151.0px;top:153px;height:40px">更新时间</div>
<div class="abs th" style="left:1841.6px;width:47.2px;top:153px;height:40px">操作</div>
<div class="abs td" style="left:259px;width:42.4px;top:194px;height:38px">240</div>
<div class="abs td" style="left:301.4px;width:190.0px;top:194px;height:38px">接口接入测试01</div>
<div class="abs td" style="left:491.4px;width:75.6px;top:194px;height:38px">美食饮品</div>
<div class="abs td" style="left:567px;width:161.4px;top:194px;height:38px">111111</div>
<div class="abs td" style="left:728.4px;width:69.1px;top:194px;height:38px">8.00</div>
<div class="abs td" style="left:797.5px;width:89.9px;top:194px;height:38px">6491</div>
<div class="abs td" style="left:887.4px;width:62.2px;top:194px;height:38px">安徽省</div>
<div class="abs td" style="left:949.6px;width:61.0px;top:194px;height:38px">合肥市</div>
<div class="abs td" style="left:1010.6px;width:89.8px;top:194px;height:38px">包河区</div>
<div class="abs td" style="left:1100.4px;width:189.0px;top:194px;height:38px">合肥市包河区人民政府西南</div>
<div class="abs td" style="left:1289.4px;width:64.3px;top:194px;height:38px"><span class="st g"><i class="dot"></i>正常</span></div>
<div class="abs td" style="left:1353.7px;width:74.8px;top:194px;height:38px"><span class="st g"><i class="dot"></i>推荐</span></div>
<div class="abs td" style="left:1428.5px;width:63.8px;top:194px;height:38px"><span class="st g"><i class="dot"></i>普通</span></div>
<div class="abs td" style="left:1492.3px;width:47.1px;top:194px;height:38px">0</div>
<div class="abs td" style="left:1539.4px;width:151.2px;top:194px;height:38px">2020-11-27 09:33:59</div>
<div class="abs td" style="left:1690.6px;width:151.0px;top:194px;height:38px">2021-02-07 22:54:14</div>
<div class="abs td" style="left:1841.6px;width:47.2px;top:194px;height:38px;padding-bottom:0"><span class="edit"><svg width="12" height="12" viewBox="0 0 12 12" style=""><path d="M7.5 1.5 L10.5 4.5 L4 11 L0.5 11.5 L1 8 Z" fill="#fff"/><path d="M8.5 0.5 Q9.2 -0.2 9.9 0.5 L11.5 2.1 Q12.2 2.8 11.5 3.5 L11 4 L8 1 Z" fill="#fff"/><path d="M1.3 8.6 L3.4 10.7" stroke="#18bc9c" stroke-width="0.8"/></svg></span></div>
<div class="abs td" style="left:259px;width:42.4px;top:233px;height:38px">239</div>
<div class="abs td" style="left:301.4px;width:190.0px;top:233px;height:38px">测试商家</div>
<div class="abs td" style="left:491.4px;width:75.6px;top:233px;height:38px">美食饮品</div>
<div class="abs td" style="left:567px;width:161.4px;top:233px;height:38px">123123213213123</div>
<div class="abs td" style="left:728.4px;width:69.1px;top:233px;height:38px">11.00</div>
<div class="abs td" style="left:797.5px;width:89.9px;top:233px;height:38px">6490</div>
<div class="abs td" style="left:887.4px;width:62.2px;top:233px;height:38px">北京市</div>
<div class="abs td" style="left:949.6px;width:61.0px;top:233px;height:38px"></div>
<div class="abs td" style="left:1010.6px;width:89.8px;top:233px;height:38px">北京市</div>
<div class="abs td" style="left:1100.4px;width:189.0px;top:233px;height:38px">测试</div>
<div class="abs td" style="left:1289.4px;width:64.3px;top:233px;height:38px"><span class="st g"><i class="dot"></i>正常</span></div>
<div class="abs td" style="left:1353.7px;width:74.8px;top:233px;height:38px"><span class="st k"><i class="dot"></i>默认</span></div>
<div class="abs td" style="left:1428.5px;width:63.8px;top:233px;height:38px"><span class="st k"><i class="dot"></i>返佣</span></div>
<div class="abs td" style="left:1492.3px;width:47.1px;top:233px;height:38px">0</div>
<div class="abs td" style="left:1539.4px;width:151.2px;top:233px;height:38px">2020-10-29 10:40:38</div>
<div class="abs td" style="left:1690.6px;width:151.0px;top:233px;height:38px">2021-02-07 22:58:11</div>
<div class="abs td" style="left:1841.6px;width:47.2px;top:233px;height:38px;padding-bottom:0"><span class="edit"><svg width="12" height="12" viewBox="0 0 12 12" style=""><path d="M7.5 1.5 L10.5 4.5 L4 11 L0.5 11.5 L1 8 Z" fill="#fff"/><path d="M8.5 0.5 Q9.2 -0.2 9.9 0.5 L11.5 2.1 Q12.2 2.8 11.5 3.5 L11 4 L8 1 Z" fill="#fff"/><path d="M1.3 8.6 L3.4 10.7" stroke="#18bc9c" stroke-width="0.8"/></svg></span></div>
<div class="abs td" style="left:259px;width:42.4px;top:272px;height:38px">238</div>
<div class="abs td" style="left:301.4px;width:190.0px;top:272px;height:38px">测试</div>
<div class="abs td" style="left:491.4px;width:75.6px;top:272px;height:38px">美食饮品</div>
<div class="abs td" style="left:567px;width:161.4px;top:272px;height:38px">129137735172063241</div>
<div class="abs td" style="left:728.4px;width:69.1px;top:272px;height:38px">100.00</div>
<div class="abs td" style="left:797.5px;width:89.9px;top:272px;height:38px">2433</div>
<div class="abs td" style="left:887.4px;width:62.2px;top:272px;height:38px">河南省</div>
<div class="abs td" style="left:949.6px;width:61.0px;top:272px;height:38px">郑州市</div>
<div class="abs td" style="left:1010.6px;width:89.8px;top:272px;height:38px">管城回族区</div>
<div class="abs td" style="left:1100.4px;width:189.0px;top:272px;height:38px">会展中心地铁站</div>
<div class="abs td" style="left:1289.4px;width:64.3px;top:272px;height:38px"><span class="st g"><i class="dot"></i>正常</span></div>
<div class="abs td" style="left:1353.7px;width:74.8px;top:272px;height:38px"><span class="st k"><i class="dot"></i>默认</span></div>
<div class="abs td" style="left:1428.5px;width:63.8px;top:272px;height:38px"><span class="st k"><i class="dot"></i>返佣</span></div>
<div class="abs td" style="left:1492.3px;width:47.1px;top:272px;height:38px">0</div>
<div class="abs td" style="left:1539.4px;width:151.2px;top:272px;height:38px">2020-10-28 17:10:18</div>
<div class="abs td" style="left:1690.6px;width:151.0px;top:272px;height:38px">2020-11-20 20:23:40</div>
<div class="abs td" style="left:1841.6px;width:47.2px;top:272px;height:38px;padding-bottom:0"><span class="edit"><svg width="12" height="12" viewBox="0 0 12 12" style=""><path d="M7.5 1.5 L10.5 4.5 L4 11 L0.5 11.5 L1 8 Z" fill="#fff"/><path d="M8.5 0.5 Q9.2 -0.2 9.9 0.5 L11.5 2.1 Q12.2 2.8 11.5 3.5 L11 4 L8 1 Z" fill="#fff"/><path d="M1.3 8.6 L3.4 10.7" stroke="#18bc9c" stroke-width="0.8"/></svg></span></div>
<div class="abs td" style="left:259px;width:42.4px;top:311px;height:38px">236</div>
<div class="abs td" style="left:301.4px;width:190.0px;top:311px;height:38px">美宜佳</div>
<div class="abs td" style="left:491.4px;width:75.6px;top:311px;height:38px">未选择</div>
<div class="abs td" style="left:567px;width:161.4px;top:311px;height:38px"></div>
<div class="abs td" style="left:728.4px;width:69.1px;top:311px;height:38px">98.00</div>
<div class="abs td" style="left:797.5px;width:89.9px;top:311px;height:38px">6450</div>
<div class="abs td" style="left:887.4px;width:62.2px;top:311px;height:38px">-</div>
<div class="abs td" style="left:949.6px;width:61.0px;top:311px;height:38px">-</div>
<div class="abs td" style="left:1010.6px;width:89.8px;top:311px;height:38px">-</div>
<div class="abs td" style="left:1100.4px;width:189.0px;top:311px;height:38px">-</div>
<div class="abs td" style="left:1289.4px;width:64.3px;top:311px;height:38px"><span class="st g"><i class="dot"></i>正常</span></div>
<div class="abs td" style="left:1353.7px;width:74.8px;top:311px;height:38px"><span class="st k"><i class="dot"></i>默认</span></div>
<div class="abs td" style="left:1428.5px;width:63.8px;top:311px;height:38px"><span class="st k"><i class="dot"></i>返佣</span></div>
<div class="abs td" style="left:1492.3px;width:47.1px;top:311px;height:38px">0</div>
<div class="abs td" style="left:1539.4px;width:151.2px;top:311px;height:38px">2020-10-28 16:25:28</div>
<div class="abs td" style="left:1690.6px;width:151.0px;top:311px;height:38px">2020-10-28 16:25:28</div>
<div class="abs td" style="left:1841.6px;width:47.2px;top:311px;height:38px;padding-bottom:0"><span class="edit"><svg width="12" height="12" viewBox="0 0 12 12" style=""><path d="M7.5 1.5 L10.5 4.5 L4 11 L0.5 11.5 L1 8 Z" fill="#fff"/><path d="M8.5 0.5 Q9.2 -0.2 9.9 0.5 L11.5 2.1 Q12.2 2.8 11.5 3.5 L11 4 L8 1 Z" fill="#fff"/><path d="M1.3 8.6 L3.4 10.7" stroke="#18bc9c" stroke-width="0.8"/></svg></span></div>
<div class="abs td" style="left:259px;width:42.4px;top:350px;height:38px">235</div>
<div class="abs td" style="left:301.4px;width:190.0px;top:350px;height:38px">杨惠萍</div>
<div class="abs td" style="left:491.4px;width:75.6px;top:350px;height:38px">未选择</div>
<div class="abs td" style="left:567px;width:161.4px;top:350px;height:38px">125210417076559875</div>
<div class="abs td" style="left:728.4px;width:69.1px;top:350px;height:38px">95.00</div>
<div class="abs td" style="left:797.5px;width:89.9px;top:350px;height:38px">389</div>
<div class="abs td" style="left:887.4px;width:62.2px;top:350px;height:38px">-</div>
<div class="abs td" style="left:949.6px;width:61.0px;top:350px;height:38px">-</div>
<div class="abs td" style="left:1010.6px;width:89.8px;top:350px;height:38px">-</div>
<div class="abs td" style="left:1100.4px;width:189.0px;top:350px;height:38px">-</div>
<div class="abs td" style="left:1289.4px;width:64.3px;top:350px;height:38px"><span class="st g"><i class="dot"></i>正常</span></div>
<div class="abs td" style="left:1353.7px;width:74.8px;top:350px;height:38px"><span class="st k"><i class="dot"></i>默认</span></div>
<div class="abs td" style="left:1428.5px;width:63.8px;top:350px;height:38px"><span class="st k"><i class="dot"></i>返佣</span></div>
<div class="abs td" style="left:1492.3px;width:47.1px;top:350px;height:38px">0</div>
<div class="abs td" style="left:1539.4px;width:151.2px;top:350px;height:38px">2020-10-28 16:25:28</div>
<div class="abs td" style="left:1690.6px;width:151.0px;top:350px;height:38px">2020-10-28 16:25:28</div>
<div class="abs td" style="left:1841.6px;width:47.2px;top:350px;height:38px;padding-bottom:0"><span class="edit"><svg width="12" height="12" viewBox="0 0 12 12" style=""><path d="M7.5 1.5 L10.5 4.5 L4 11 L0.5 11.5 L1 8 Z" fill="#fff"/><path d="M8.5 0.5 Q9.2 -0.2 9.9 0.5 L11.5 2.1 Q12.2 2.8 11.5 3.5 L11 4 L8 1 Z" fill="#fff"/><path d="M1.3 8.6 L3.4 10.7" stroke="#18bc9c" stroke-width="0.8"/></svg></span></div>
<div class="abs td" style="left:259px;width:42.4px;top:389px;height:38px">234</div>
<div class="abs td" style="left:301.4px;width:190.0px;top:389px;height:38px">二号烧烤吧</div>
<div class="abs td" style="left:491.4px;width:75.6px;top:389px;height:38px">美食饮品</div>
<div class="abs td" style="left:567px;width:161.4px;top:389px;height:38px">120757566782717953</div>
<div class="abs td" style="left:728.4px;width:69.1px;top:389px;height:38px">90.00</div>
<div class="abs td" style="left:797.5px;width:89.9px;top:389px;height:38px">5704</div>
<div class="abs td" style="left:887.4px;width:62.2px;top:389px;height:38px">广东省</div>
<div class="abs td" style="left:949.6px;width:61.0px;top:389px;height:38px">惠州市</div>
<div class="abs td" style="left:1010.6px;width:89.8px;top:389px;height:38px">惠东县</div>
<div class="abs td" style="left:1100.4px;width:189.0px;top:389px;height:38px"></div>
<div class="abs td" style="left:1289.4px;width:64.3px;top:389px;height:38px"><span class="st g"><i class="dot"></i>正常</span></div>
<div class="abs td" style="left:1353.7px;width:74.8px;top:389px;height:38px"><span class="st g"><i class="dot"></i>推荐</span></div>
<div class="abs td" style="left:1428.5px;width:63.8px;top:389px;height:38px"><span class="st k"><i class="dot"></i>返佣</span></div>
<div class="abs td" style="left:1492.3px;width:47.1px;top:389px;height:38px">0</div>
<div class="abs td" style="left:1539.4px;width:151.2px;top:389px;height:38px">2020-10-19 13:44:35</div>
<div class="abs td" style="left:1690.6px;width:151.0px;top:389px;height:38px">2020-10-19 13:44:54</div>
<div class="abs td" style="left:1841.6px;width:47.2px;top:389px;height:38px;padding-bottom:0"><span class="edit"><svg width="12" height="12" viewBox="0 0 12 12" style=""><path d="M7.5 1.5 L10.5 4.5 L4 11 L0.5 11.5 L1 8 Z" fill="#fff"/><path d="M8.5 0.5 Q9.2 -0.2 9.9 0.5 L11.5 2.1 Q12.2 2.8 11.5 3.5 L11 4 L8 1 Z" fill="#fff"/><path d="M1.3 8.6 L3.4 10.7" stroke="#18bc9c" stroke-width="0.8"/></svg></span></div>
<div class="abs td" style="left:259px;width:42.4px;top:428px;height:38px">233</div>
<div class="abs td" style="left:301.4px;width:190.0px;top:428px;height:38px">源品面包店</div>
<div class="abs td" style="left:491.4px;width:75.6px;top:428px;height:38px">美食饮品</div>
<div class="abs td" style="left:567px;width:161.4px;top:428px;height:38px">110986052327849985</div>
<div class="abs td" style="left:728.4px;width:69.1px;top:428px;height:38px">90.00</div>
<div class="abs td" style="left:797.5px;width:89.9px;top:428px;height:38px">5015</div>
<div class="abs td" style="left:887.4px;width:62.2px;top:428px;height:38px">广东省</div>
<div class="abs td" style="left:949.6px;width:61.0px;top:428px;height:38px">惠州市</div>
<div class="abs td" style="left:1010.6px;width:89.8px;top:428px;height:38px">惠东县</div>
<div class="abs td" style="left:1100.4px;width:189.0px;top:428px;height:38px"></div>
<div class="abs td" style="left:1289.4px;width:64.3px;top:428px;height:38px"><span class="st g"><i class="dot"></i>正常</span></div>
<div class="abs td" style="left:1353.7px;width:74.8px;top:428px;height:38px"><span class="st g"><i class="dot"></i>推荐</span></div>
<div class="abs td" style="left:1428.5px;width:63.8px;top:428px;height:38px"><span class="st k"><i class="dot"></i>返佣</span></div>
<div class="abs td" style="left:1492.3px;width:47.1px;top:428px;height:38px">0</div>
<div class="abs td" style="left:1539.4px;width:151.2px;top:428px;height:38px">2020-10-19 13:41:23</div>
<div class="abs td" style="left:1690.6px;width:151.0px;top:428px;height:38px">2020-10-19 13:44:45</div>
<div class="abs td" style="left:1841.6px;width:47.2px;top:428px;height:38px;padding-bottom:0"><span class="edit"><svg width="12" height="12" viewBox="0 0 12 12" style=""><path d="M7.5 1.5 L10.5 4.5 L4 11 L0.5 11.5 L1 8 Z" fill="#fff"/><path d="M8.5 0.5 Q9.2 -0.2 9.9 0.5 L11.5 2.1 Q12.2 2.8 11.5 3.5 L11 4 L8 1 Z" fill="#fff"/><path d="M1.3 8.6 L3.4 10.7" stroke="#18bc9c" stroke-width="0.8"/></svg></span></div>
<div class="abs td" style="left:259px;width:42.4px;top:467px;height:38px">232</div>
<div class="abs td" style="left:301.4px;width:190.0px;top:467px;height:38px">世纪阁理发店</div>
<div class="abs td" style="left:491.4px;width:75.6px;top:467px;height:38px">美容美发</div>
<div class="abs td" style="left:567px;width:161.4px;top:467px;height:38px">110986009378177025</div>
<div class="abs td" style="left:728.4px;width:69.1px;top:467px;height:38px">85.00</div>
<div class="abs td" style="left:797.5px;width:89.9px;top:467px;height:38px">5231</div>
<div class="abs td" style="left:887.4px;width:62.2px;top:467px;height:38px">广东省</div>
<div class="abs td" style="left:949.6px;width:61.0px;top:467px;height:38px">惠州市</div>
<div class="abs td" style="left:1010.6px;width:89.8px;top:467px;height:38px">惠东县</div>
<div class="abs td" style="left:1100.4px;width:189.0px;top:467px;height:38px"></div>
<div class="abs td" style="left:1289.4px;width:64.3px;top:467px;height:38px"><span class="st g"><i class="dot"></i>正常</span></div>
<div class="abs td" style="left:1353.7px;width:74.8px;top:467px;height:38px"><span class="st g"><i class="dot"></i>推荐</span></div>
<div class="abs td" style="left:1428.5px;width:63.8px;top:467px;height:38px"><span class="st k"><i class="dot"></i>返佣</span></div>
<div class="abs td" style="left:1492.3px;width:47.1px;top:467px;height:38px">0</div>
<div class="abs td" style="left:1539.4px;width:151.2px;top:467px;height:38px">2020-10-19 13:39:38</div>
<div class="abs td" style="left:1690.6px;width:151.0px;top:467px;height:38px">2020-10-19 13:42:31</div>
<div class="abs td" style="left:1841.6px;width:47.2px;top:467px;height:38px;padding-bottom:0"><span class="edit"><svg width="12" height="12" viewBox="0 0 12 12" style=""><path d="M7.5 1.5 L10.5 4.5 L4 11 L0.5 11.5 L1 8 Z" fill="#fff"/><path d="M8.5 0.5 Q9.2 -0.2 9.9 0.5 L11.5 2.1 Q12.2 2.8 11.5 3.5 L11 4 L8 1 Z" fill="#fff"/><path d="M1.3 8.6 L3.4 10.7" stroke="#18bc9c" stroke-width="0.8"/></svg></span></div>
<div class="abs td" style="left:259px;width:42.4px;top:506px;height:38px">231</div>
<div class="abs td" style="left:301.4px;width:190.0px;top:506px;height:38px">小茶里奶茶店</div>
<div class="abs td" style="left:491.4px;width:75.6px;top:506px;height:38px">美食饮品</div>
<div class="abs td" style="left:567px;width:161.4px;top:506px;height:38px">109841443543482369</div>
<div class="abs td" style="left:728.4px;width:69.1px;top:506px;height:38px">90.00</div>
<div class="abs td" style="left:797.5px;width:89.9px;top:506px;height:38px">3048</div>
<div class="abs td" style="left:887.4px;width:62.2px;top:506px;height:38px">广东省</div>
<div class="abs td" style="left:949.6px;width:61.0px;top:506px;height:38px">惠州市</div>
<div class="abs td" style="left:1010.6px;width:89.8px;top:506px;height:38px">惠东县</div>
<div class="abs td" style="left:1100.4px;width:189.0px;top:506px;height:38px"></div>
<div class="abs td" style="left:1289.4px;width:64.3px;top:506px;height:38px"><span class="st g"><i class="dot"></i>正常</span></div>
<div class="abs td" style="left:1353.7px;width:74.8px;top:506px;height:38px"><span class="st g"><i class="dot"></i>推荐</span></div>
<div class="abs td" style="left:1428.5px;width:63.8px;top:506px;height:38px"><span class="st k"><i class="dot"></i>返佣</span></div>
<div class="abs td" style="left:1492.3px;width:47.1px;top:506px;height:38px">0</div>
<div class="abs td" style="left:1539.4px;width:151.2px;top:506px;height:38px">2020-10-19 13:38:23</div>
<div class="abs td" style="left:1690.6px;width:151.0px;top:506px;height:38px">2020-10-19 13:38:37</div>
<div class="abs td" style="left:1841.6px;width:47.2px;top:506px;height:38px;padding-bottom:0"><span class="edit"><svg width="12" height="12" viewBox="0 0 12 12" style=""><path d="M7.5 1.5 L10.5 4.5 L4 11 L0.5 11.5 L1 8 Z" fill="#fff"/><path d="M8.5 0.5 Q9.2 -0.2 9.9 0.5 L11.5 2.1 Q12.2 2.8 11.5 3.5 L11 4 L8 1 Z" fill="#fff"/><path d="M1.3 8.6 L3.4 10.7" stroke="#18bc9c" stroke-width="0.8"/></svg></span></div>
<div class="abs td" style="left:259px;width:42.4px;top:545px;height:38px">230</div>
<div class="abs td" style="left:301.4px;width:190.0px;top:545px;height:38px">世纪陆壹捌美妆形象设计店</div>
<div class="abs td" style="left:491.4px;width:75.6px;top:545px;height:38px">美容美发</div>
<div class="abs td" style="left:567px;width:161.4px;top:545px;height:38px">109841555212632065</div>
<div class="abs td" style="left:728.4px;width:69.1px;top:545px;height:38px">85.00</div>
<div class="abs td" style="left:797.5px;width:89.9px;top:545px;height:38px">5252</div>
<div class="abs td" style="left:887.4px;width:62.2px;top:545px;height:38px">广东省</div>
<div class="abs td" style="left:949.6px;width:61.0px;top:545px;height:38px">惠州市</div>
<div class="abs td" style="left:1010.6px;width:89.8px;top:545px;height:38px">惠东县</div>
<div class="abs td" style="left:1100.4px;width:189.0px;top:545px;height:38px"></div>
<div class="abs td" style="left:1289.4px;width:64.3px;top:545px;height:38px"><span class="st g"><i class="dot"></i>正常</span></div>
<div class="abs td" style="left:1353.7px;width:74.8px;top:545px;height:38px"><span class="st g"><i class="dot"></i>推荐</span></div>
<div class="abs td" style="left:1428.5px;width:63.8px;top:545px;height:38px"><span class="st k"><i class="dot"></i>返佣</span></div>
<div class="abs td" style="left:1492.3px;width:47.1px;top:545px;height:38px">0</div>
<div class="abs td" style="left:1539.4px;width:151.2px;top:545px;height:38px">2020-10-19 13:36:03</div>
<div class="abs td" style="left:1690.6px;width:151.0px;top:545px;height:38px">2021-01-08 16:56:43</div>
<div class="abs td" style="left:1841.6px;width:47.2px;top:545px;height:38px;padding-bottom:0"><span class="edit"><svg width="12" height="12" viewBox="0 0 12 12" style=""><path d="M7.5 1.5 L10.5 4.5 L4 11 L0.5 11.5 L1 8 Z" fill="#fff"/><path d="M8.5 0.5 Q9.2 -0.2 9.9 0.5 L11.5 2.1 Q12.2 2.8 11.5 3.5 L11 4 L8 1 Z" fill="#fff"/><path d="M1.3 8.6 L3.4 10.7" stroke="#18bc9c" stroke-width="0.8"/></svg></span></div>
<div class="abs" id="pinfo">显示第 1 到第 10 条记录，总共 233 条记录 每页显示</div>
<div class="abs" id="psize">10<span style="display:inline-block;margin-left:4px;margin-top:-1px"><svg width="8" height="4" viewBox="0 0 8 4" style=""><path d="M0 4 H8 L4 0 Z" fill="#333"/></svg></span></div>
<div class="abs" id="pinfo2">条记录</div>
<div class="abs pg pfirst" style="left:1524px;width:64.0px">上一页</div>
<div class="abs pg pact" style="left:1588px;width:33.0px">1</div>
<div class="abs pg" style="left:1621px;width:32.0px">2</div>
<div class="abs pg" style="left:1653px;width:32.0px">3</div>
<div class="abs pg" style="left:1685px;width:32.0px">4</div>
<div class="abs pg" style="left:1717px;width:33.0px">5</div>
<div class="abs pg pell" style="left:1750px;width:36.0px">...</div>
<div class="abs pg" style="left:1786px;width:39.0px">24</div>
<div class="abs pg plast" style="left:1825px;width:64.0px">下一页</div>
</body></html>
